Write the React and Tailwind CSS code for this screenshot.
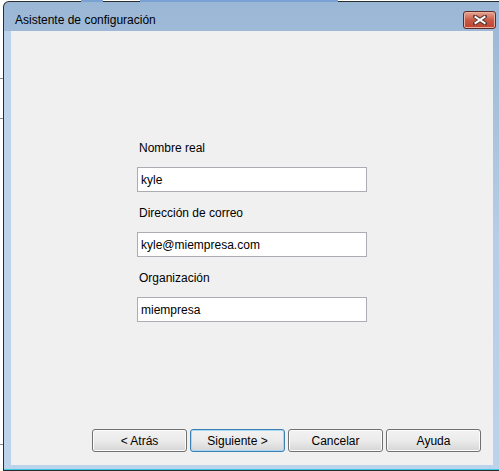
import React from 'react';

const fontStack = { fontFamily: '"Liberation Sans", Arial, sans-serif' };

const Field = ({ label, value }) => (
  <div className="flex flex-col">
    <label className="ml-[2px] h-[16px] text-[12px] leading-[16px] text-black">{label}</label>
    <div className="mt-[11px] flex h-[25px] w-[230px] items-center border border-[#abadb3] bg-white pl-[3px] text-[12px] text-black">
      {value}
    </div>
  </div>
);

const WizButton = ({ children, primary }) => (
  <button
    className={
      'h-[23px] w-[95px] rounded-[3px] border text-[12px] text-black bg-gradient-to-b from-[#f2f2f2] via-[#ebebeb] to-[#d6d6d6] ' +
      (primary ? 'border-[#3c7fb1] shadow-[inset_0_0_0_1px_#a7d9f5]' : 'border-[#707070] shadow-[inset_0_0_0_1px_#fcfcfc]')
    }
  >
    {children}
  </button>
);

const CloseButton = () => (
  <div className="flex h-[18px] w-[33px] items-center justify-center rounded-[3px] border border-[#5b2a24] bg-gradient-to-b from-[#e8a493] via-[#c75a45] to-[#c0402c] shadow-[inset_0_0_0_1px_#eab0a2]">
    <svg width="14" height="10" viewBox="0 0 14 10">
      <path d="M2 1.5 L12 8.5 M12 1.5 L2 8.5" stroke="#5a3a36" strokeWidth="4" strokeLinecap="square" />
      <path d="M2.5 2 L11.5 8 M11.5 2 L2.5 8" stroke="#ffffff" strokeWidth="2" strokeLinecap="square" />
    </svg>
  </div>
);

const App = () => {
  return (
    <div className="relative h-[471px] w-[499px] overflow-hidden bg-white" style={fontStack}>
      {/* desktop bits behind the window */}
      <div className="absolute left-[81px] top-0 h-[2px] w-[22px] bg-[#7aa1d4]" />
      <div className="absolute left-[140px] top-0 h-[2px] w-[198px] bg-[#7aa1d4]" />
      <div className="absolute left-0 top-[78px] h-px w-[3px] bg-[#8a8a8a]" />
      <div className="absolute left-0 top-[118px] h-px w-[3px] bg-[#8a8a8a]" />
      <div className="absolute left-0 top-[444px] h-px w-[3px] bg-[#8a8a8a]" />

      <div className="ml-[3px] mt-[1px] w-[510px] rounded-t-[6px] border border-b-0 border-[#2b2b2b] bg-gradient-to-b from-[#9bb7d6] via-[#b5cde6] to-[#bcd3ec]">
        <div className="flex h-[29px] items-start justify-between pl-[11px] pr-[16px]">
          <span className="mt-[10px] text-[12px] leading-[16px] text-black">Asistente de configuración</span>
          <div className="mt-[9px]">
            <CloseButton />
          </div>
        </div>
        <div className="flex">
          <div className="w-[7px] bg-[#bcd3ec]" />
          <div className="flex h-[434px] w-[482px] flex-col bg-[#f0f0f0]">
            <div className="ml-[126px] mt-[109px] flex flex-col gap-[13px]">
              <Field label="Nombre real" value="kyle" />
              <Field label="Dirección de correo" value="kyle@miempresa.com" />
              <Field label="Organización" value="miempresa" />
            </div>
            <div className="mt-auto mb-[13px] ml-[81px] flex gap-[3px]">
              <WizButton>&lt; Atrás</WizButton>
              <WizButton primary>Siguiente &gt;</WizButton>
              <WizButton>Cancelar</WizButton>
              <WizButton>Ayuda</WizButton>
            </div>
          </div>
        </div>
        <div className="h-[4px] bg-[#bcd3ec]" />
        <div className="h-px bg-[#39c7e6]" />
        <div className="h-px bg-[#2b2b2b]" />
      </div>
    </div>
  );
};

export default App;
